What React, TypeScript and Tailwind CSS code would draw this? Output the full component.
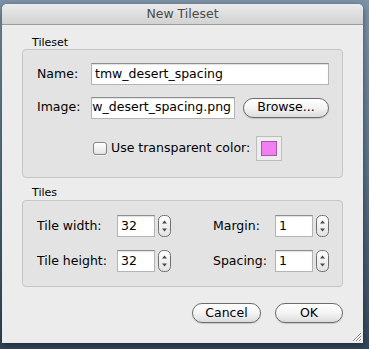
import type { ReactNode } from "react";

const font = { fontFamily: '"DejaVu Sans", "Noto Sans", sans-serif' };

function TextInput({ value, width, alignEnd }: { value: string; width: string; alignEnd?: boolean }) {
  return (
    <div
      className={`${width} flex h-[22px] items-center overflow-hidden whitespace-nowrap border border-[#b4b4b4] border-t-[#8e8e8e] bg-white px-[3px] text-[12.5px] text-black shadow-[inset_0_1px_1px_rgba(0,0,0,0.12)] ${
        alignEnd ? "justify-end" : "justify-start"
      }`}
    >
      {value}
    </div>
  );
}

function PillButton({ children, width }: { children: ReactNode; width: string }) {
  return (
    <div
      className={`${width} flex h-[20px] items-center justify-center rounded-full border border-[#6c6c6c] bg-gradient-to-b from-white via-[#f4f4f4] to-[#dcdcdc] text-[12.5px] text-black shadow-[0_1px_1px_rgba(0,0,0,0.15)]`}
    >
      {children}
    </div>
  );
}

function Spinner() {
  return (
    <svg width="13" height="22" viewBox="0 0 13 22">
      <defs>
        <linearGradient id="spin" x1="0" y1="0" x2="0" y2="1">
          <stop offset="0" stopColor="#ffffff" />
          <stop offset="1" stopColor="#e2e2e2" />
        </linearGradient>
      </defs>
      <rect x="0.5" y="0.5" width="12" height="21" rx="5" fill="url(#spin)" stroke="#6f6f6f" />
      <path d="M4 8.5 L6.5 5.5 L9 8.5 Z" fill="#4a4a4a" />
      <path d="M4 13.5 L6.5 16.5 L9 13.5 Z" fill="#4a4a4a" />
    </svg>
  );
}

function SpinField({ label, labelWidth, inputWidth, value }: { label: string; labelWidth: string; inputWidth: string; value: string }) {
  return (
    <div className="flex h-[22px] items-center">
      <div className={`${labelWidth} text-[12.5px] text-black`}>{label}</div>
      <TextInput value={value} width={inputWidth} />
      <div className="ml-[3px] flex">
        <Spinner />
      </div>
    </div>
  );
}

export default function App() {
  return (
    <div
      className="h-[349px] w-[369px] overflow-hidden bg-gradient-to-b from-[#7d93a8] via-[#56708a] to-[#33465b] pl-[2px] pt-[4px]"
      style={font}
    >
      <div className="relative flex h-[339px] w-[361px] flex-col overflow-hidden rounded-t-[5px] bg-[#ececec] shadow-[0_2px_6px_rgba(0,0,0,0.45)]">
        <div className="flex h-[21px] items-center justify-center border-b border-[#9c9c9c] bg-gradient-to-b from-[#ebebeb] to-[#d2d2d2] text-[12.5px] text-[#4a4a4a]">
          New Tileset
        </div>

        <div className="px-[20px] pt-[11px]">
          <div className="h-[13px] pl-[10px] text-[11px] leading-[13px] text-black">Tileset</div>
          <div className="h-[129px] rounded-[4px] border border-[#c6c6c6] bg-[#e3e3e3] pl-[14px] pt-[13px]">
            <div className="flex h-[22px] items-center">
              <div className="w-[54px] text-[12.5px] text-black">Name:</div>
              <TextInput value="tmw_desert_spacing" width="w-[238px]" />
            </div>
            <div className="mt-[12px] flex h-[21px] items-center">
              <div className="w-[54px] text-[12.5px] text-black">Image:</div>
              <TextInput value="tmw_desert_spacing.png" width="w-[144px]" alignEnd />
              <div className="ml-[8px]">
                <PillButton width="w-[86px]">Browse...</PillButton>
              </div>
            </div>
            <div className="mt-[18px] flex h-[25px] items-center pl-[56px]">
              <div className="h-[13px] w-[14px] rounded-[3px] border border-[#858585] bg-gradient-to-b from-white to-[#e4e4e4] shadow-[0_1px_0_rgba(255,255,255,0.6)]" />
              <div className="ml-[4px] text-[12.5px] text-black">Use transparent color:</div>
              <div className="ml-[6px] flex h-[25px] w-[26px] items-center justify-center border border-[#bdbdbd] bg-[#ededed]">
                <div className="h-[15px] w-[16px] border border-[#a45aa4] bg-[#f27ff2]" />
              </div>
            </div>
          </div>

          <div className="mt-[8px] h-[14px] pl-[10px] text-[11px] leading-[14px] text-black">Tiles</div>
          <div className="h-[87px] rounded-[4px] border border-[#c6c6c6] bg-[#e3e3e3] pl-[14px] pt-[14px]">
            <div className="flex">
              <SpinField label="Tile width:" labelWidth="w-[80px]" inputWidth="w-[38px]" value="32" />
              <div className="ml-[42px]">
                <SpinField label="Margin:" labelWidth="w-[62px]" inputWidth="w-[38px]" value="1" />
              </div>
            </div>
            <div className="mt-[13px] flex">
              <SpinField label="Tile height:" labelWidth="w-[80px]" inputWidth="w-[38px]" value="32" />
              <div className="ml-[42px]">
                <SpinField label="Spacing:" labelWidth="w-[62px]" inputWidth="w-[38px]" value="1" />
              </div>
            </div>
          </div>

          <div className="mt-[16px] flex justify-end gap-[14px]">
            <PillButton width="w-[69px]">Cancel</PillButton>
            <PillButton width="w-[68px]">OK</PillButton>
          </div>
        </div>

        <svg className="absolute bottom-[1px] right-[1px]" width="11" height="11" viewBox="0 0 11 11">
          <path d="M10 2 L2 10 M10 5 L5 10 M10 8 L8 10" stroke="#8a8a8a" strokeWidth="1" />
          <path d="M10 3 L3 10 M10 6 L6 10 M10 9 L9 10" stroke="#ffffff" strokeWidth="1" />
        </svg>
      </div>
    </div>
  );
}
